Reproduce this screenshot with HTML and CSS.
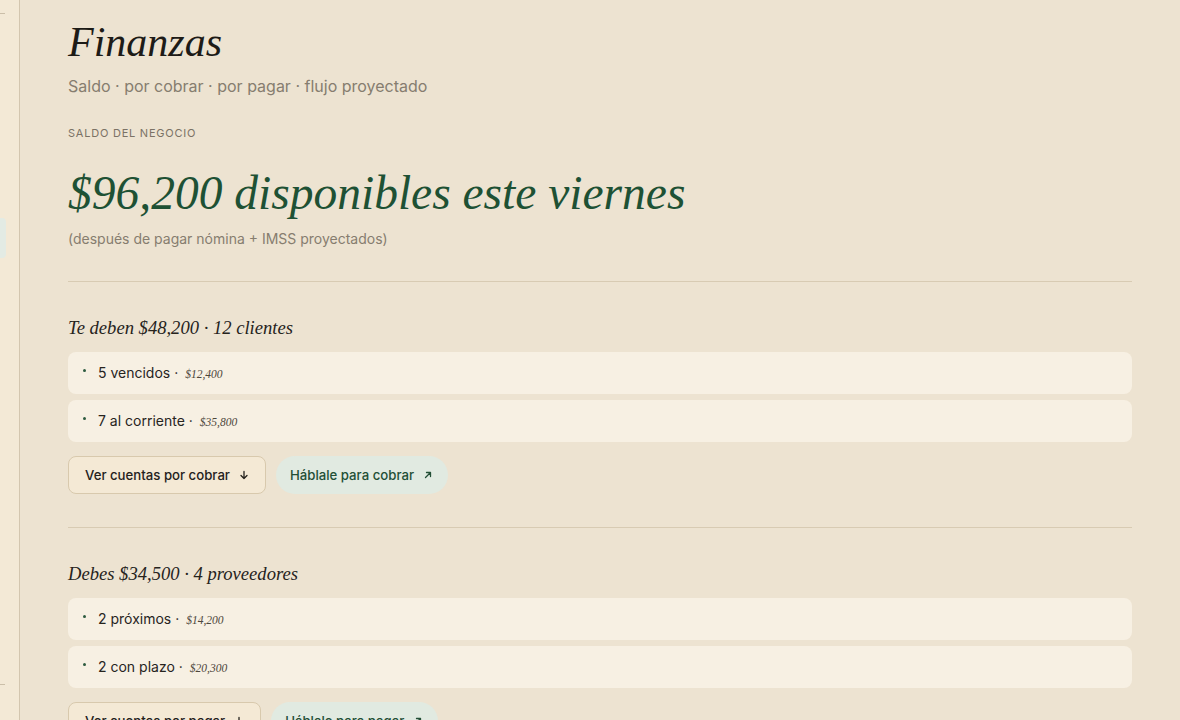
FILE: index.html
```html
<!DOCTYPE html>
<html lang="es">
<head>
<meta charset="utf-8">
<title>Finanzas</title>
<link rel="stylesheet" href="styles.css">
</head>
<body>
<div class="app">
  <aside class="sidebar">
    <div class="side-rule top"></div>
    <div class="side-active"></div>
    <div class="side-rule bottom"></div>
  </aside>
  <main class="main">
    <header class="page-head">
      <h1 class="title">Finanzas</h1>
      <p class="subtitle">Saldo · por cobrar · por pagar · flujo proyectado</p>
    </header>

    <section class="balance">
      <div class="eyebrow">SALDO DEL NEGOCIO</div>
      <div class="big">$96,200 disponibles este viernes</div>
      <div class="note">(después de pagar nómina + IMSS proyectados)</div>
    </section>

    <section class="block">
      <h2 class="block-title">Te deben $48,200 · 12 clientes</h2>
      <ul class="rows">
        <li class="row"><span class="dot"></span><span class="row-text">5 vencidos ·</span><span class="amt">$12,400</span></li>
        <li class="row"><span class="dot"></span><span class="row-text">7 al corriente ·</span><span class="amt">$35,800</span></li>
      </ul>
      <div class="actions">
        <button class="btn btn-outline">Ver cuentas por cobrar
          <svg class="ico" viewBox="0 0 12 12" width="12" height="12"><path d="M6 2.5v7M3 6.5l3 3 3-3" fill="none" stroke="currentColor" stroke-width="1.3" stroke-linecap="round" stroke-linejoin="round"/></svg>
        </button>
        <button class="btn btn-pill">Háblale para cobrar
          <svg class="ico" viewBox="0 0 12 12" width="12" height="12"><path d="M3.5 8.5l5-5M4.5 3.5h4v4" fill="none" stroke="currentColor" stroke-width="1.3" stroke-linecap="round" stroke-linejoin="round"/></svg>
        </button>
      </div>
    </section>

    <section class="block">
      <h2 class="block-title">Debes $34,500 · 4 proveedores</h2>
      <ul class="rows">
        <li class="row"><span class="dot"></span><span class="row-text">2 próximos ·</span><span class="amt">$14,200</span></li>
        <li class="row"><span class="dot"></span><span class="row-text">2 con plazo ·</span><span class="amt">$20,300</span></li>
      </ul>
      <div class="actions">
        <button class="btn btn-outline">Ver cuentas por pagar
          <svg class="ico" viewBox="0 0 12 12" width="12" height="12"><path d="M6 2.5v7M3 6.5l3 3 3-3" fill="none" stroke="currentColor" stroke-width="1.3" stroke-linecap="round" stroke-linejoin="round"/></svg>
        </button>
        <button class="btn btn-pill">Háblale para pagar
          <svg class="ico" viewBox="0 0 12 12" width="12" height="12"><path d="M3.5 8.5l5-5M4.5 3.5h4v4" fill="none" stroke="currentColor" stroke-width="1.3" stroke-linecap="round" stroke-linejoin="round"/></svg>
        </button>
      </div>
    </section>
  </main>
</div>
</body>
</html>
```

FILE: styles.css
```css
* { box-sizing: border-box; }
html, body { margin: 0; padding: 0; }
body {
  background: #ede3d1;
  font-family: Inter, "Noto Sans", "Liberation Sans", sans-serif;
  color: #2a2620;
  height: 720px;
  overflow: hidden;
}
.app {
  display: flex;
  height: 720px;
  overflow: hidden;
}
.sidebar {
  width: 20px;
  flex: none;
  background: #f3e9d6;
  border-right: 1px solid #d3c6af;
  display: flex;
  flex-direction: column;
  padding-top: 13px;
}
.side-rule {
  width: 5px;
  height: 1px;
  background: #cbbfa9;
}
.side-active {
  margin-top: 204px;
  width: 6px;
  height: 40px;
  background: #e3ebe4;
  border-radius: 0 4px 4px 0;
}
.side-rule.bottom { margin-top: 426px; }

.main {
  flex: 1;
  padding: 18px 48px 0 48px;
  min-width: 0;
}
.page-head { margin: 0; }
.title {
  margin: 0;
  font-family: "Liberation Serif", "Times New Roman", serif;
  font-style: italic;
  font-weight: 400;
  font-size: 42px;
  line-height: 48px;
  color: #1d1b17;
}
.subtitle {
  margin: 9px 0 0;
  font-size: 16px;
  line-height: 22px;
  color: #867d6f;
}
.balance {
  padding-top: 29px;
  padding-bottom: 33px;
  border-bottom: 1px solid #d8cbb3;
}
.eyebrow {
  font-size: 11px;
  line-height: 14px;
  letter-spacing: 0.07em;
  color: #7b7265;
}
.big {
  margin-top: 25px;
  font-family: "Liberation Serif", "Times New Roman", serif;
  font-style: italic;
  font-size: 47.5px;
  line-height: 56px;
  color: #1e5134;
}
.note {
  margin-top: 9px;
  font-size: 14px;
  line-height: 18px;
  color: #867d6f;
}
.block {
  padding-top: 33px;
  padding-bottom: 33px;
  border-bottom: 1px solid #d8cbb3;
}
.block-title {
  margin: 0;
  font-family: "Liberation Serif", "Times New Roman", serif;
  font-style: italic;
  font-weight: 400;
  font-size: 18.6px;
  line-height: 26px;
  color: #26231d;
}
.rows {
  list-style: none;
  margin: 11px 0 0;
  padding: 0;
  display: flex;
  flex-direction: column;
  gap: 6px;
}
.row {
  height: 42px;
  background: #f7f0e3;
  border-radius: 8px;
  display: flex;
  align-items: center;
  padding-left: 15px;
  padding-bottom: 2px;
}
.dot {
  width: 3px;
  height: 3px;
  border-radius: 50%;
  background: #2c5a3f;
  margin-right: 12px;
  align-self: center;
  margin-top: -4px;
}
.row-text {
  font-size: 14px;
  color: #27241e;
}
.amt {
  margin-left: 7px;
  font-family: "Liberation Serif", "Times New Roman", serif;
  font-style: italic;
  font-size: 11.5px;
  color: #4e473c;
  padding-top: 3px;
}
.actions {
  display: flex;
  gap: 10px;
  margin-top: 14px;
}
.btn {
  height: 38px;
  display: inline-flex;
  align-items: center;
  gap: 8px;
  font-family: Inter, "Noto Sans", "Liberation Sans", sans-serif;
  font-size: 13.2px;
  font-weight: 500;
  cursor: pointer;
}
.btn-outline {
  background: #f4e9d5;
  border: 1px solid #d8c9ad;
  border-radius: 8px;
  padding: 0 15px 0 16px;
  color: #24211c;
}
.btn-pill {
  background: #e1eae1;
  border: none;
  border-radius: 19px;
  padding: 0 14px 0 14px;
  color: #234f36;
}
.ico { flex: none; }
```
